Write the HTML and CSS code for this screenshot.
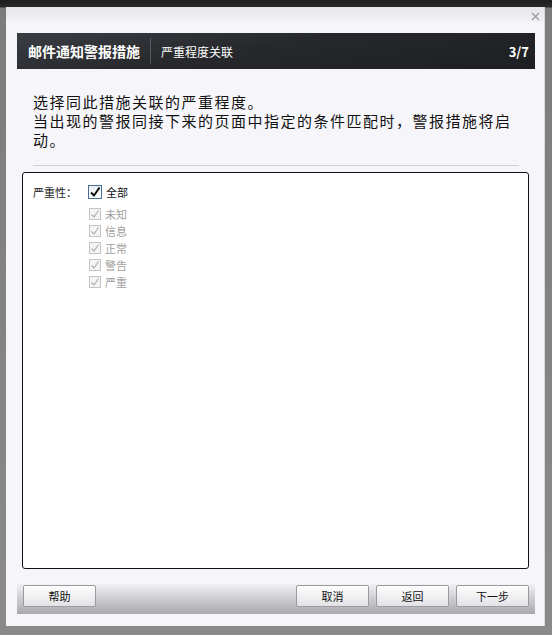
FILE: index.html
```html
<!DOCTYPE html>
<html lang="zh-CN">
<head>
    <meta charset="UTF-8">
    <title>邮件通知警报措施</title>
    <link rel="stylesheet" href="styles.css">
</head>
<body>
    <div class="dialog">
        <div class="titlebar">
            <span class="close">
                <svg width="9" height="9" viewBox="0 0 9 9"><path d="M1 1L8 8M8 1L1 8" stroke="#9a9aa0" stroke-width="1.4"/></svg>
            </span>
        </div>
        <div class="header">
            <span class="title">邮件通知警报措施</span>
            <span class="step">严重程度关联</span>
            <span class="count">3/7</span>
        </div>
        <div class="intro">
            <p>选择同此措施关联的严重程度。<br>当出现的警报同接下来的页面中指定的条件匹配时，警报措施将启动。</p>
        </div>
        <div class="rule"></div>
        <div class="panel">
            <div class="row">
                <span class="label">严重性：</span>
                <div class="checks">
                    <label class="check main"><span class="box"><svg width="12" height="12" viewBox="0 0 12 12"><path d="M2 6.5L5 9.5L10.5 1.5" fill="none" stroke="#111" stroke-width="2"/></svg></span>全部</label>
                    <div class="sub">
                        <label class="check off"><span class="box"><svg width="10" height="10" viewBox="0 0 10 10"><path d="M1.5 5.5L4 8L8.5 1.5" fill="none" stroke="#b4b4b4" stroke-width="1.3"/></svg></span>未知</label>
                        <label class="check off"><span class="box"><svg width="10" height="10" viewBox="0 0 10 10"><path d="M1.5 5.5L4 8L8.5 1.5" fill="none" stroke="#b4b4b4" stroke-width="1.3"/></svg></span>信息</label>
                        <label class="check off"><span class="box"><svg width="10" height="10" viewBox="0 0 10 10"><path d="M1.5 5.5L4 8L8.5 1.5" fill="none" stroke="#b4b4b4" stroke-width="1.3"/></svg></span>正常</label>
                        <label class="check off"><span class="box"><svg width="10" height="10" viewBox="0 0 10 10"><path d="M1.5 5.5L4 8L8.5 1.5" fill="none" stroke="#b4b4b4" stroke-width="1.3"/></svg></span>警告</label>
                        <label class="check off"><span class="box"><svg width="10" height="10" viewBox="0 0 10 10"><path d="M1.5 5.5L4 8L8.5 1.5" fill="none" stroke="#b4b4b4" stroke-width="1.3"/></svg></span>严重</label>
                    </div>
                </div>
            </div>
        </div>
        <div class="footer">
            <button class="btn">帮助</button>
            <div class="right">
                <button class="btn">取消</button>
                <button class="btn">返回</button>
                <button class="btn">下一步</button>
            </div>
        </div>
    </div>
</body>
</html>
```

FILE: styles.css
```css
html, body {
    margin: 0;
    padding: 0;
}
body {
    width: 552px;
    height: 635px;
    box-sizing: border-box;
    padding: 7px 7px 9px 6px;
    background: linear-gradient(to bottom, #1e1e1e 0, #2a2a2a 7px, #7c7c7c 8px, #8a8a8a 100%);
    font-family: "Noto Sans CJK SC", "Liberation Sans", sans-serif;
    overflow: hidden;
}
.dialog {
    height: 619px;
    box-sizing: border-box;
    background: #f6f6fa;
    border-right: 1px solid #d8d8de;
    display: flex;
    flex-direction: column;
    padding: 0 9px 0 11px;
}
.titlebar {
    height: 15px;
    flex-shrink: 0;
    margin: 0 -9px 0 -11px;
    background: linear-gradient(to bottom, #e6e6ea, #f2f2f6);
    display: flex;
    justify-content: flex-end;
    align-items: center;
    padding-right: 4px;
}
.close {
    display: flex;
    margin-top: 4px;
}
.header {
    margin-top: 11px;
    height: 36px;
    flex-shrink: 0;
    background: linear-gradient(170deg, #3a3d42 0%, #26282c 45%, #1d1f22 100%);
    color: #fff;
    display: flex;
    align-items: center;
    padding: 0 6px 0 11px;
}
.title {
    font-size: 14px;
    font-weight: bold;
    padding-right: 10px;
    border-right: 1px solid #55585c;
    line-height: 26px;
}
.step {
    font-size: 12px;
    padding-left: 10px;
    flex: 1;
}
.count {
    font-size: 13px;
    font-weight: bold;
}
.intro {
    padding: 0 16px;
    margin-top: 23px;
}
.intro p {
    margin: 0;
    width: 486px;
    font-size: 15px;
    letter-spacing: 1.5px;
    line-height: 19px;
    color: #111;
}
.rule {
    margin: 16px 16px 0;
    height: 1px;
    flex-shrink: 0;
    background: #cfcfd3;
}
.panel {
    margin: 6px 6px 0 5px;
    height: 397px;
    flex-shrink: 0;
    box-sizing: border-box;
    border: 1px solid #111;
    border-radius: 3px;
    background: #fff;
    padding: 10px 10px;
}
.row {
    display: flex;
}
.label {
    font-size: 11px;
    color: #222;
    width: 55px;
    line-height: 17px;
    padding-top: 1px;
}
.checks {
    display: flex;
    flex-direction: column;
}
.check {
    display: flex;
    align-items: center;
    font-size: 11px;
    height: 17px;
}
.check .box {
    box-sizing: border-box;
    display: flex;
    align-items: center;
    justify-content: center;
    margin-right: 4px;
}
.main .box {
    width: 14px;
    height: 14px;
    border: 1px solid #4a6f95;
    background: linear-gradient(to bottom, #e9eef4, #fff);
}
.main {
    color: #111;
    height: 18px;
}
.sub {
    margin-top: 4px;
    padding-left: 1px;
}
.off {
    color: #a0a0a0;
}
.off .box {
    width: 12px;
    height: 12px;
    border: 1px solid #c4c4c4;
    background: #f4f4f4;
}
.footer {
    margin-top: 15px;
    height: 30px;
    flex-shrink: 0;
    box-sizing: border-box;
    background: linear-gradient(to bottom, #f2f2f4 0%, #c9c9cc 55%, #a9a9ad 100%);
    display: flex;
    justify-content: space-between;
    padding: 1px 6px 0 6px;
    align-items: flex-start;
}
.right {
    display: flex;
    gap: 7px;
}
.btn {
    width: 73px;
    height: 22px;
    font-family: "Noto Sans CJK SC", sans-serif;
    font-size: 11px;
    color: #111;
    border: 1px solid #9a9aa0;
    border-radius: 2px;
    background: linear-gradient(to bottom, #fdfdfd 0%, #f1f1f3 50%, #e2e2e6 100%);
    padding: 0;
}
```
